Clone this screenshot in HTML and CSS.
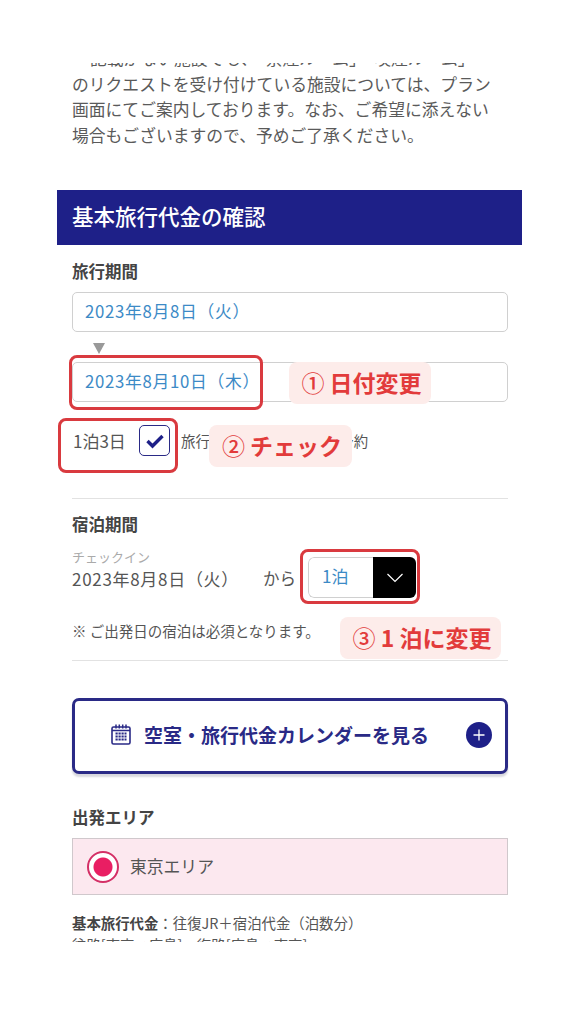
FILE: index.html
```html
<!DOCTYPE html>
<html lang="ja">
<head>
    <meta charset="UTF-8">
    <meta name="viewport" content="width=device-width, initial-scale=1.0">
    <title>基本旅行代金の確認</title>
    <link rel="stylesheet" href="styles.css">
</head>
<body>
    <div class="page">
        <div class="screen">
            <p class="intro">記載がない施設でも、「禁煙ルーム」「喫煙ルーム」<br>のリクエストを受け付けている施設については、プラン<br>画面にてご案内しております。なお、ご希望に添えない<br>場合もございますので、予めご了承ください。</p>

            <h2 class="bar-title">基本旅行代金の確認</h2>

            <div class="section">
                <h3 class="label">旅行期間</h3>
                <div class="date-input">2023年8月8日（火）</div>
                <div class="arrow"></div>
                <div class="date-input">2023年8月10日（木）</div>
                <div class="stay-row">
                    <span class="stay-count">1泊3日</span>
                    <span class="checkbox">
                        <svg width="20" height="16" viewBox="0 0 20 16"><path d="M2.5 8l5 5 10-10" fill="none" stroke="#1e2088" stroke-width="3.4"/></svg>
                    </span>
                    <span class="stay-note">旅行期間と異なる宿泊で予約</span>
                </div>
            </div>

            <div class="section stay-section">
                <h3 class="label">宿泊期間</h3>
                <div class="checkin-row">
                    <div class="checkin">
                        <small>チェックイン</small>
                        <span>2023年8月8日（火）</span>
                    </div>
                    <span class="from">から</span>
                    <div class="select">
                        <span class="select-value">1泊</span>
                        <span class="select-btn">
                            <svg width="18" height="10" viewBox="0 0 18 10"><path d="M1.5 1l7.5 7.5L16.5 1" fill="none" stroke="#fff" stroke-width="1.2"/></svg>
                        </span>
                    </div>
                </div>
                <p class="note">※ ご出発日の宿泊は必須となります。</p>
            </div>

            <button class="calendar-btn">
                <svg class="cal-icon" width="20" height="21" viewBox="0 0 20 21">
                    <rect x="1" y="3" width="18" height="17" rx="1.5" fill="none" stroke="#2a2a86" stroke-width="1.6"/>
                    <path d="M1 6.5h18M5 0.5v4M8.3 0.5v4M11.7 0.5v4M15 0.5v4" stroke="#2a2a86" stroke-width="1.5"/>
                    <path d="M4.5 9.5h11M4.5 12.5h11M4.5 15.5h11" stroke="#2a2a86" stroke-width="2" stroke-dasharray="2.2 .8"/>
                </svg>
                <span>空室・旅行代金カレンダーを見る</span>
                <svg class="plus-icon" width="26" height="26" viewBox="0 0 26 26">
                    <circle cx="13" cy="13" r="13" fill="#1e2088"/>
                    <path d="M13 7.5v11M7.5 13h11" stroke="#fff" stroke-width="1.3"/>
                </svg>
            </button>

            <div class="section area-section">
                <h3 class="label">出発エリア</h3>
                <div class="area-box">
                    <span class="radio"></span>
                    <span class="area-name">東京エリア</span>
                </div>
                <p class="price-note"><b>基本旅行代金</b>：往復JR＋宿泊代金（泊数分）</p>
                <p class="price-note route">往路[東京→広島]、復路[広島→東京]</p>
            </div>
        </div>

        <!-- 注釈 -->
        <div class="mark mark-date"></div>
        <div class="mark mark-check"></div>
        <div class="mark mark-stay"></div>
        <div class="tag tag-date"><i>①</i> 日付変更</div>
        <div class="tag tag-check"><i>②</i> チェック</div>
        <div class="tag tag-stay"><i>③</i> 1 泊に変更</div>
    </div>
</body>
</html>
```

FILE: styles.css
```css
* {
    margin: 0;
    padding: 0;
    box-sizing: border-box;
}

body {
    background: #fff;
    font-family: "Noto Sans CJK JP", "Noto Sans", sans-serif;
    color: #555;
}

.page {
    position: relative;
    width: 576px;
    height: 1024px;
    overflow: hidden;
}

/* 画面キャプチャ部分 */
.screen {
    width: 465px;
    height: 879px;
    margin: 63px 0 0 57px;
    overflow: hidden;
}

.intro {
    margin: -17px 0 0 15px;
    font-size: 16.8px;
    line-height: 25.5px;
    text-indent: 18px;
    white-space: nowrap;
    color: #5a5a5a;
}

.bar-title {
    height: 55px;
    margin-top: 42px;
    padding-left: 15px;
    background: #1e2088;
    color: #fff;
    font-size: 21.5px;
    font-weight: 500;
    line-height: 52px;
}

.section {
    padding: 0 14px 0 15px;
}

.label {
    height: 24px;
    margin-top: 14px;
    font-size: 16.5px;
    font-weight: 700;
    line-height: 24px;
    color: #444;
}

.date-input {
    height: 40px;
    margin-top: 9px;
    padding-left: 12px;
    border: 1.5px solid #d0d0d0;
    border-radius: 5px;
    font-size: 16.8px;
    letter-spacing: 0.7px;
    line-height: 37px;
    color: #3c8ac6;
}

.arrow {
    width: 12px;
    height: 11px;
    margin: 11px 0 -1px 21px;
    background: #999;
    clip-path: polygon(0 0, 100% 0, 50% 100%);
}

.stay-row {
    display: flex;
    align-items: center;
    margin-top: 23px;
}

.stay-count {
    width: 67px;
    padding-left: 1px;
    font-size: 17px;
}

.checkbox {
    display: flex;
    align-items: center;
    justify-content: center;
    width: 31px;
    height: 31px;
    border: 1.5px solid #2a2a86;
    border-radius: 5px;
}

.stay-note {
    margin-left: 11px;
    font-size: 14.4px;
}

.stay-section {
    position: relative;
    margin-top: 42px;
    padding-top: 14px;
}

.stay-section .label {
    margin-top: 0;
}

.stay-section::before {
    content: "";
    position: absolute;
    top: 0;
    left: 15px;
    right: 14px;
    border-top: 1.5px solid #e2e2e2;
}

.checkin-row {
    display: flex;
    align-items: flex-start;
    margin-top: 12px;
}

.checkin {
    display: flex;
    flex-direction: column;
    width: 191px;
    white-space: nowrap;
}

.checkin small {
    font-size: 13px;
    line-height: 18px;
    color: #aaa;
}

.checkin span {
    font-size: 17px;
    letter-spacing: 0.7px;
    line-height: 25px;
}

.from {
    width: 45px;
    margin-top: 18px;
    font-size: 16.5px;
    line-height: 25px;
}

.select {
    display: flex;
    width: 108px;
    height: 41px;
    margin-top: 9px;
    border-radius: 6px;
    overflow: hidden;
}

.select-value {
    flex: 1;
    padding-left: 13px;
    border: 1.5px solid #d0d0d0;
    border-right: 0;
    border-radius: 6px 0 0 6px;
    font-size: 17px;
    line-height: 36px;
    color: #3c8ac6;
}

.select-btn {
    display: flex;
    align-items: center;
    justify-content: center;
    width: 43px;
    background: #000;
}

.note {
    height: 40px;
    margin-top: 23px;
    border-bottom: 1.5px solid #e2e2e2;
    font-size: 14.5px;
    line-height: 20px;
}

.calendar-btn {
    display: flex;
    align-items: center;
    position: relative;
    width: 436px;
    height: 76px;
    margin: 37px 0 0 15px;
    padding: 0 0 3px 36px;
    background: #fff;
    border: 3px solid #2a2a86;
    border-radius: 7px;
    box-shadow: 0 3px 2px #d8d8de;
    font-family: inherit;
    font-size: 19px;
    font-weight: 700;
    color: #2a2a86;
}

.cal-icon {
    margin-right: 13px;
}

.plus-icon {
    position: absolute;
    left: 391px;
    top: 21px;
}

.area-section .label {
    margin-top: 31px;
}

.area-box {
    display: flex;
    align-items: center;
    height: 57px;
    margin-top: 9px;
    padding-left: 14px;
    background: #fce8ef;
    border: 1.5px solid #d0c8cc;
    font-size: 16.8px;
}

.area-name {
    margin-bottom: 2px;
}

.radio {
    width: 32px;
    height: 32px;
    margin-right: 11px;
    border: 2.5px solid #d42f66;
    border-radius: 50%;
    background: radial-gradient(circle, #e91e63 0 9px, #fff 10px);
}

.price-note {
    font-size: 14.4px;
    line-height: 22px;
}

.price-note:first-of-type {
    margin-top: 17px;
}

.price-note b {
    color: #444;
}

/* 注釈 */
.mark {
    position: absolute;
    width: 120px;
    height: 55px;
    border: 3px solid #d93a3f;
    border-radius: 8px;
}

.mark-date {
    left: 69px;
    top: 355px;
    width: 194px;
}

.mark-check {
    left: 58px;
    top: 418px;
}

.mark-stay {
    left: 300px;
    top: 549px;
}

.tag {
    position: absolute;
    height: 42px;
    padding-left: 3px;
    border-radius: 8px;
    background: #fdecea;
    color: #e23b3b;
    font-size: 23px;
    font-weight: 700;
    line-height: 40px;
    text-align: center;
    white-space: nowrap;
}

.tag i {
    font-style: normal;
    font-weight: 500;
}

.tag-date {
    left: 289px;
    top: 362px;
    width: 142px;
}

.tag-check {
    left: 209px;
    top: 425px;
    width: 143px;
}

.tag-stay {
    left: 340px;
    top: 617px;
    width: 161px;
}
```
